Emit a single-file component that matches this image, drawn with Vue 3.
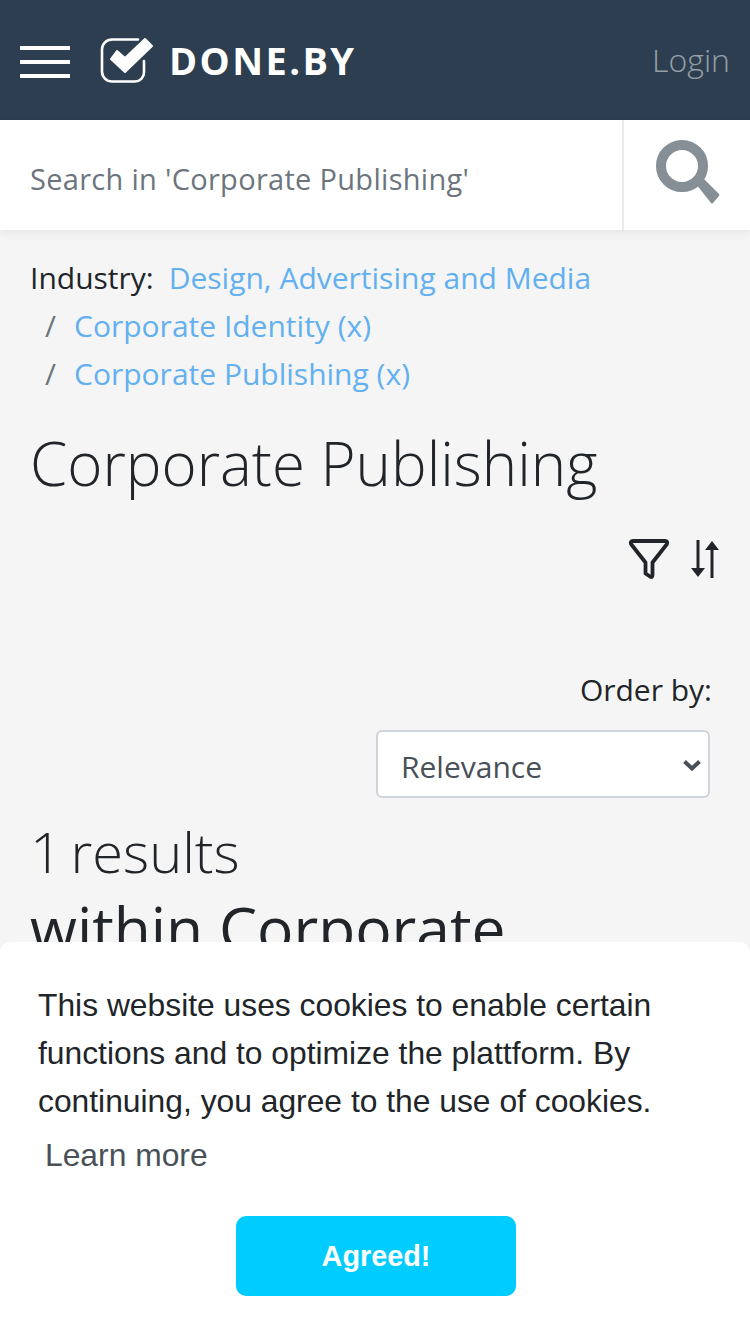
<template>
  <div class="page">
    <header class="topbar">
      <button class="burger" aria-label="Menu">
        <span></span><span></span><span></span>
      </button>
      <a class="logo">
        <svg class="logo-icon" width="56" height="48" viewBox="0 0 56 48">
          <path d="M38 3.5H12a10 10 0 0 0-10 10v22a10 10 0 0 0 10 10h23a9 9 0 0 0 9-9V25" fill="none" stroke="#fff" stroke-width="2.6" stroke-linecap="round" />
          <path d="M11 23 L25 36 L52 10 L45 3 L25 22 L17 15 Z" fill="#fff" stroke="#fff" stroke-width="2" stroke-linejoin="round" />
        </svg>
        <span class="logo-text">DONE.BY</span>
      </a>
      <a class="login">Login</a>
    </header>

    <div class="searchbar">
      <div class="search-text">Search in 'Corporate Publishing'</div>
      <div class="search-btn">
        <svg width="64" height="64" viewBox="0 0 64 64">
          <circle cx="26" cy="26" r="21" fill="none" stroke="#868e96" stroke-width="10" />
          <path d="M40 44 L46 37 L63 54 Q64 55 63 56 L57 63 Q56 64 55 63 Z" fill="#868e96" />
        </svg>
      </div>
    </div>

    <main class="content">
      <div class="crumbs">
        <div class="crumb-row">
          <span class="crumb-label">Industry:</span>
          <a class="link">Design, Advertising and Media</a>
        </div>
        <div class="crumb-row sub"><span class="sep">/</span><a class="link">Corporate Identity (x)</a></div>
        <div class="crumb-row sub"><span class="sep">/</span><a class="link">Corporate Publishing (x)</a></div>
      </div>

      <h1 class="title">Corporate Publishing</h1>

      <div class="tools">
        <svg width="42" height="42" viewBox="0 0 42 42">
          <path d="M5 3H37Q40 3 39 6L24.500 24.500V37Q24.500 40 22 38.500L17.500 35.500V24.500L3 6Q2 3 5 3Z" fill="none" stroke="#212529" stroke-width="3.800" stroke-linejoin="round" />
        </svg>
        <svg width="30" height="38" viewBox="0 0 30 38">
          <path d="M8 0V28" stroke="#212529" stroke-width="3" fill="none" />
          <path d="M1 28H15L8 37Z" fill="#212529" />
          <path d="M22 38V10" stroke="#212529" stroke-width="3" fill="none" />
          <path d="M15 10H29L22 1Z" fill="#212529" />
        </svg>
      </div>

      <div class="order">
        <label class="order-label">Order by:</label>
        <div class="select-wrap">
          <select class="order-select">
            <option>Relevance</option>
          </select>
          <svg class="select-arrow" width="20" height="12" viewBox="0 0 20 12">
            <path d="M2.500 2.500L10 9.500L17.500 2.500" fill="none" stroke="#495057" stroke-width="4" />
          </svg>
        </div>
      </div>

      <h2 class="results">
        <span class="count">1 results</span>
        <span class="within">within Corporate Publishing</span>
      </h2>
    </main>

    <div class="cookie">
      <p class="cookie-msg">This website uses cookies to enable certain functions and to optimize the plattform. By continuing, you agree to the use of cookies.</p>
      <a class="cookie-more">Learn more</a>
      <button class="cookie-btn">Agreed!</button>
    </div>
  </div>
</template>

<script setup>
</script>

<style>
html, body { margin: 0; background: #f5f5f5; }
</style>

<style scoped>
.page {
  position: relative;
  width: 750px;
  height: 1334px;
  overflow: hidden;
  background: #f5f5f5;
  color: #212529;
  font-family: "Open Sans", "Noto Sans", sans-serif;
  font-size: 30px;
}
.topbar {
  height: 120px;
  background: #2c3e50;
  display: flex;
  align-items: center;
  padding: 0 20px;
  box-sizing: border-box;
}
.burger {
  width: 50px;
  height: 32px;
  margin-top: 4px;
  padding: 0;
  border: 0;
  background: none;
  display: flex;
  flex-direction: column;
  justify-content: space-between;
}
.burger span {
  display: block;
  height: 4px;
  background: #fff;
}
.logo {
  display: flex;
  align-items: center;
  margin-left: 30px;
}
.logo-icon { margin-right: 13px; }
.logo-text {
  color: #fff;
  font-weight: 700;
  font-size: 38px;
  letter-spacing: 2.4px;
}
.login {
  margin-left: auto;
  margin-bottom: 2px;
  color: rgba(255, 255, 255, 0.5);
  font-size: 32px;
  font-weight: 300;
}
.searchbar {
  height: 110px;
  background: #fff;
  display: flex;
  box-shadow: 0 2px 10px rgba(0, 0, 0, 0.08);
}
.search-text {
  flex: 1;
  padding-left: 30px;
  line-height: 118px;
  color: #6c757d;
  font-size: 29px;
  letter-spacing: 0.3px;
}
.search-btn {
  width: 128px;
  padding: 0 0 6px 2px;
  border-left: 2px solid #e9e9e9;
  box-sizing: border-box;
  display: flex;
  align-items: center;
  justify-content: center;
}
.content { padding: 24px 40px 0 30px; }
.crumb-row { line-height: 48px; }
.crumb-label { margin-right: 15px; }
.crumb-row.sub { padding-left: 15px; }
.sep { color: #6c757d; margin-right: 18px; }
.link { color: #63b0f1; }
.title {
  margin: 29px 0 0;
  font-size: 60px;
  font-weight: 300;
  line-height: 72px;
}
.tools {
  display: flex;
  justify-content: flex-end;
  align-items: center;
  gap: 20px;
  margin-top: 39px;
  margin-right: -10px;
}
.order {
  display: flex;
  flex-direction: column;
  align-items: flex-end;
  margin-top: 86px;
}
.order-label {
  line-height: 48px;
  margin-right: -2px;
}
.select-wrap {
  position: relative;
  margin-top: 16px;
}
.order-select {
  display: block;
  width: 334px;
  height: 68px;
  box-sizing: border-box;
  padding: 4px 23px 0;
  appearance: none;
  background: #fff;
  border: 2px solid #ced4da;
  border-radius: 6px;
  color: #495057;
  font-family: inherit;
  font-size: 30px;
}
.select-arrow {
  position: absolute;
  right: 8px;
  top: 29px;
  pointer-events: none;
}
.results {
  margin: 14px 0 0;
  font-weight: 300;
}
.count, .within { display: block; }
.count {
  font-size: 56px;
  line-height: 78px;
  word-spacing: -6px;
}
.within {
  font-size: 60.500px;
  line-height: 76px;
  font-weight: 400;
}
.cookie {
  position: absolute;
  left: 0;
  right: 0;
  bottom: 0;
  height: 392px;
  box-sizing: border-box;
  padding: 39px 38px 0;
  background: #fff;
  border-radius: 10px 10px 0 0;
  font-family: "Liberation Sans", Arial, sans-serif;
  font-size: 31.800px;
  line-height: 48px;
  color: #212529;
}
.cookie-msg { margin: 0; }
.cookie-more {
  display: block;
  margin: 6px 0 0 7px;
  color: #495057;
}
.cookie-btn {
  display: block;
  width: 280px;
  height: 80px;
  margin: 37px 0 0 198px;
  border: 0;
  border-radius: 10px;
  background: #00ccff;
  color: #fff;
  font-family: inherit;
  font-size: 28.800px;
  font-weight: 700;
}
</style>
